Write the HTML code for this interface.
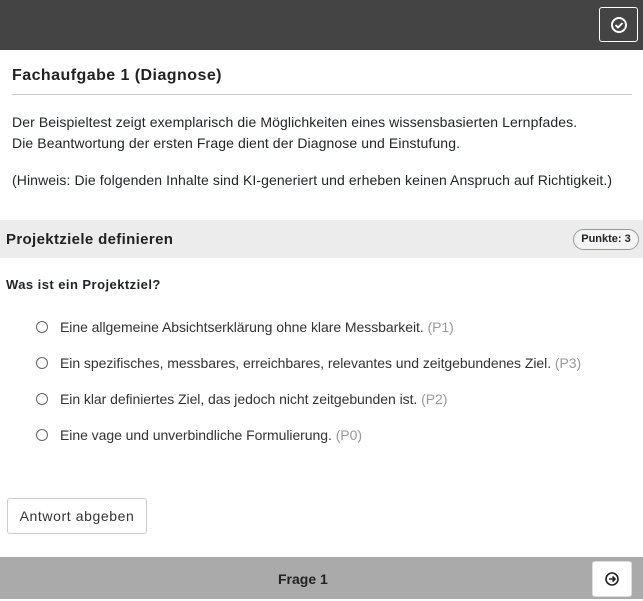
<!DOCTYPE html>
<html><head><meta charset="utf-8"><style>
*{box-sizing:border-box;margin:0;padding:0}
body{width:643px;height:599px;overflow:hidden;background:#fff;font-family:"Liberation Sans",Arial,sans-serif;color:#212529;position:relative}
.top{position:absolute;left:0;top:0;width:643px;height:50px;background:#444}
.tbtn{position:absolute;left:599px;top:7px;width:39px;height:35px;border:1px solid #fff;border-radius:3px}
.abs{position:absolute;white-space:nowrap}
h1{position:absolute;left:12px;top:67px;font-size:16px;font-weight:bold;color:#222;letter-spacing:0.45px}
.hr{position:absolute;left:12px;top:94px;width:620px;height:1px;background:#ccc}
.p{font-size:14px;left:12px;letter-spacing:0.1px}
.sec{position:absolute;left:0;top:220px;width:643px;height:38px;background:#ececec}
.sec span{position:absolute;left:6px;top:11px;font-size:15px;font-weight:bold;color:#222;letter-spacing:0.35px}
.badge{position:absolute;left:573px;top:229px;width:66px;height:21px;border:1px solid #999;border-radius:11px;font-size:11px;font-weight:bold;text-align:center;line-height:19px;background:#f4f4f4}
.q{left:6px;top:277px;font-size:13px;font-weight:bold;letter-spacing:0.45px}
.opt{left:36px;font-size:14px;color:#333;letter-spacing:-0.05px}
.opt i{display:inline-block;width:12px;height:12px;border:1px solid #666;border-radius:50%;vertical-align:-1px;margin-right:12px}
.opt b{font-weight:normal;color:#999}
.btn{position:absolute;left:7px;top:498px;width:140px;height:36px;border:1px solid #ccc;border-radius:3px;font-size:14px;text-align:center;line-height:34px;color:#333;letter-spacing:0.6px}
.foot{position:absolute;left:0;top:557px;width:643px;height:42px;background:#aaa}
.foot span{position:absolute;left:278px;top:14px;font-size:14px;font-weight:bold;color:#222}
.nbtn{position:absolute;left:592px;top:561px;width:40px;height:36px;background:#fff;border:1px solid #ddd;border-radius:3px}
</style></head><body>
<div class="top"><div class="tbtn"><svg width="39" height="35" viewBox="0 0 39 35"><circle cx="19" cy="17" r="7" fill="none" stroke="#fff" stroke-width="2"/><path d="M15.5 17l2.5 2.5 4.5-4.5" fill="none" stroke="#fff" stroke-width="1.9"/></svg></div></div>
<h1>Fachaufgabe 1 (Diagnose)</h1>
<div class="hr"></div>
<div class="abs p" style="top:114px">Der Beispieltest zeigt exemplarisch die Möglichkeiten eines wissensbasierten Lernpfades.</div>
<div class="abs p" style="top:135px">Die Beantwortung der ersten Frage dient der Diagnose und Einstufung.</div>
<div class="abs p" style="top:172px">(Hinweis: Die folgenden Inhalte sind KI-generiert und erheben keinen Anspruch auf Richtigkeit.)</div>
<div class="sec"><span>Projektziele definieren</span></div>
<div class="badge">Punkte: 3</div>
<div class="abs q">Was ist ein Projektziel?</div>
<div class="abs opt" style="top:319px"><i></i>Eine allgemeine Absichtserklärung ohne klare Messbarkeit. <b>(P1)</b></div>
<div class="abs opt" style="top:355px"><i></i>Ein spezifisches, messbares, erreichbares, relevantes und zeitgebundenes Ziel. <b>(P3)</b></div>
<div class="abs opt" style="top:391px"><i></i>Ein klar definiertes Ziel, das jedoch nicht zeitgebunden ist. <b>(P2)</b></div>
<div class="abs opt" style="top:427px"><i></i>Eine vage und unverbindliche Formulierung. <b>(P0)</b></div>
<div class="btn">Antwort abgeben</div>
<div class="foot"><span>Frage 1</span></div>
<div class="nbtn"><svg width="38" height="34" viewBox="0 0 38 34"><circle cx="19" cy="17" r="6" fill="none" stroke="#222" stroke-width="1.6"/><path d="M16 17h6M19.5 14.5l2.5 2.5-2.5 2.5" fill="none" stroke="#222" stroke-width="1.6"/></svg></div>
</body></html>
